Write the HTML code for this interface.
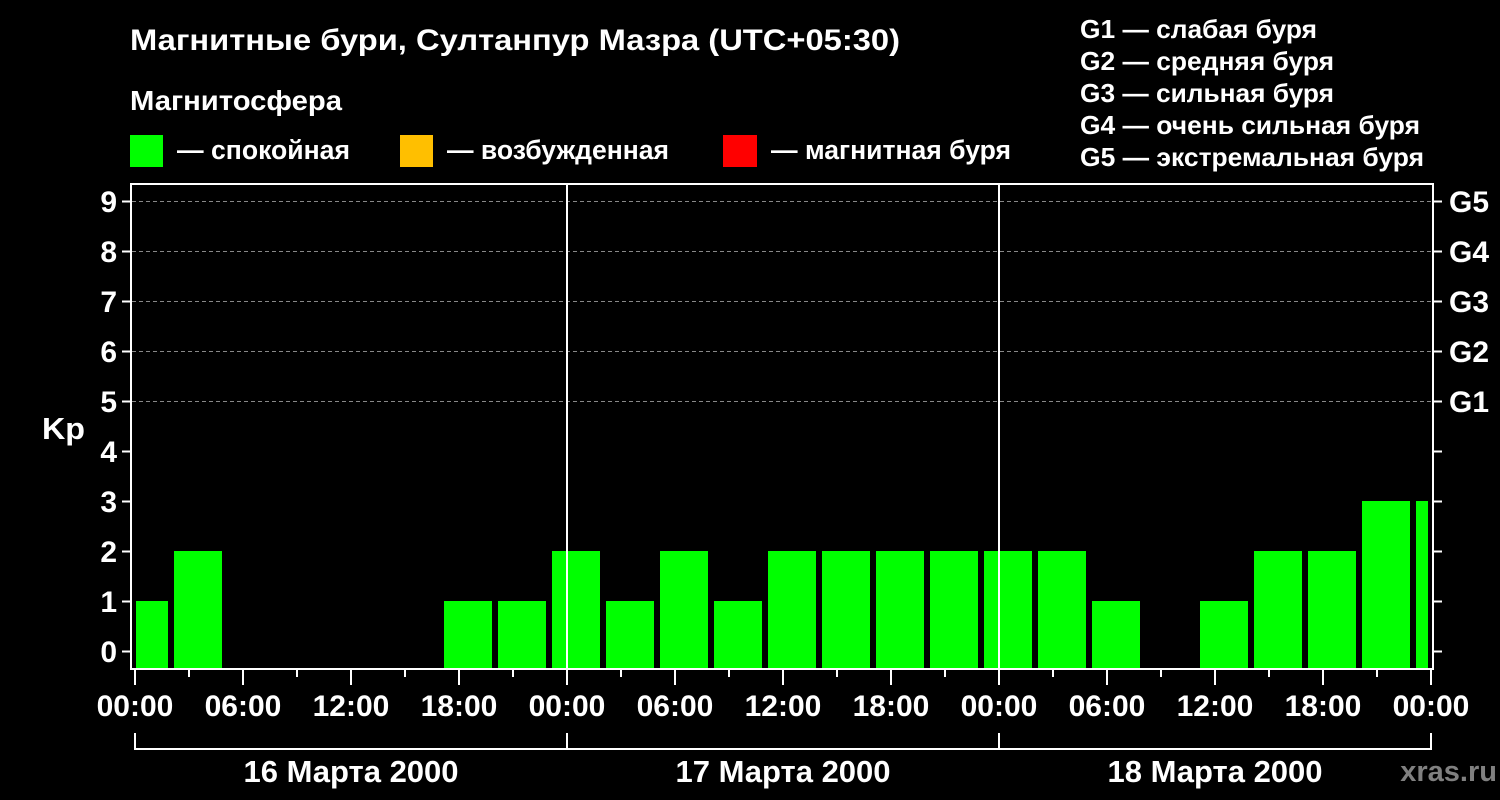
<!DOCTYPE html>
<html><head><meta charset="utf-8"><style>
html,body{margin:0;padding:0;background:#000;}
svg{display:block;}
text{font-family:"Liberation Sans",sans-serif;font-weight:bold;fill:#fff;}
</style></head><body>
<svg width="1500" height="800" viewBox="0 0 1500 800" xmlns="http://www.w3.org/2000/svg">
<rect width="1500" height="800" fill="#000"/>
<text x="130" y="50" font-size="30" textLength="770" lengthAdjust="spacingAndGlyphs">Магнитные бури, Султанпур Мазра (UTC+05:30)</text>
<text x="130" y="110" font-size="28" textLength="212" lengthAdjust="spacingAndGlyphs">Магнитосфера</text>
<rect x="130" y="135" width="33" height="32" fill="#00ff00"/>
<text x="177" y="159" font-size="27" textLength="173" lengthAdjust="spacingAndGlyphs">— спокойная</text>
<rect x="400" y="135" width="33" height="32" fill="#ffbf00"/>
<text x="447" y="159" font-size="27" textLength="222" lengthAdjust="spacingAndGlyphs">— возбужденная</text>
<rect x="723" y="135" width="34" height="32" fill="#ff0000"/>
<text x="771" y="159" font-size="27" textLength="240" lengthAdjust="spacingAndGlyphs">— магнитная буря</text>
<g font-size="26">
<text x="1080" y="38" textLength="237" lengthAdjust="spacingAndGlyphs">G1 — слабая буря</text>
<text x="1080" y="70" textLength="254" lengthAdjust="spacingAndGlyphs">G2 — средняя буря</text>
<text x="1080" y="102" textLength="254" lengthAdjust="spacingAndGlyphs">G3 — сильная буря</text>
<text x="1080" y="134" textLength="340" lengthAdjust="spacingAndGlyphs">G4 — очень сильная буря</text>
<text x="1080" y="166" textLength="344" lengthAdjust="spacingAndGlyphs">G5 — экстремальная буря</text>
</g>
<g stroke="#888" stroke-width="1" stroke-dasharray="4,3">
<line x1="132" y1="201.5" x2="1432" y2="201.5"/>
<line x1="132" y1="251.5" x2="1432" y2="251.5"/>
<line x1="132" y1="301.5" x2="1432" y2="301.5"/>
<line x1="132" y1="351.5" x2="1432" y2="351.5"/>
<line x1="132" y1="401.5" x2="1432" y2="401.5"/>
</g>
<g fill="#00ff00">
<rect x="136" y="601" width="32" height="67"/>
<rect x="174" y="551" width="48" height="117"/>
<rect x="444" y="601" width="48" height="67"/>
<rect x="498" y="601" width="48" height="67"/>
<rect x="552" y="551" width="48" height="117"/>
<rect x="606" y="601" width="48" height="67"/>
<rect x="660" y="551" width="48" height="117"/>
<rect x="714" y="601" width="48" height="67"/>
<rect x="768" y="551" width="48" height="117"/>
<rect x="822" y="551" width="48" height="117"/>
<rect x="876" y="551" width="48" height="117"/>
<rect x="930" y="551" width="48" height="117"/>
<rect x="984" y="551" width="48" height="117"/>
<rect x="1038" y="551" width="48" height="117"/>
<rect x="1092" y="601" width="48" height="67"/>
<rect x="1200" y="601" width="48" height="67"/>
<rect x="1254" y="551" width="48" height="117"/>
<rect x="1308" y="551" width="48" height="117"/>
<rect x="1362" y="501" width="48" height="167"/>
<rect x="1416" y="501" width="12" height="167"/>
</g>
<g stroke="#fff" stroke-width="2" fill="none">
<line x1="131" y1="184" x2="1433" y2="184"/>
<line x1="131" y1="183" x2="131" y2="670"/>
<line x1="1433" y1="183" x2="1433" y2="670"/>
<line x1="130" y1="669" x2="1434" y2="669"/>
<line x1="567" y1="183" x2="567" y2="668"/>
<line x1="999" y1="183" x2="999" y2="668"/>
</g>
<g stroke="#fff" stroke-width="2">
<line x1="122" y1="201.5" x2="131" y2="201.5"/><line x1="1433" y1="201.5" x2="1442" y2="201.5"/>
<line x1="122" y1="251.5" x2="131" y2="251.5"/><line x1="1433" y1="251.5" x2="1442" y2="251.5"/>
<line x1="122" y1="301.5" x2="131" y2="301.5"/><line x1="1433" y1="301.5" x2="1442" y2="301.5"/>
<line x1="122" y1="351.5" x2="131" y2="351.5"/><line x1="1433" y1="351.5" x2="1442" y2="351.5"/>
<line x1="122" y1="401.5" x2="131" y2="401.5"/><line x1="1433" y1="401.5" x2="1442" y2="401.5"/>
<line x1="122" y1="451.5" x2="131" y2="451.5"/><line x1="1433" y1="451.5" x2="1442" y2="451.5"/>
<line x1="122" y1="501.5" x2="131" y2="501.5"/><line x1="1433" y1="501.5" x2="1442" y2="501.5"/>
<line x1="122" y1="551.5" x2="131" y2="551.5"/><line x1="1433" y1="551.5" x2="1442" y2="551.5"/>
<line x1="122" y1="601.5" x2="131" y2="601.5"/><line x1="1433" y1="601.5" x2="1442" y2="601.5"/>
<line x1="122" y1="651.5" x2="131" y2="651.5"/><line x1="1433" y1="651.5" x2="1442" y2="651.5"/>
</g>
<g font-size="30" text-anchor="end">
<text x="117" y="212">9</text><text x="117" y="262">8</text><text x="117" y="312">7</text>
<text x="117" y="362">6</text><text x="117" y="412">5</text><text x="117" y="462">4</text>
<text x="117" y="512">3</text><text x="117" y="562">2</text><text x="117" y="612">1</text>
<text x="117" y="662">0</text>
</g>
<text x="42" y="439" font-size="31" textLength="43" lengthAdjust="spacingAndGlyphs">Kp</text>
<g font-size="30">
<text x="1449" y="212">G5</text><text x="1449" y="262">G4</text><text x="1449" y="312">G3</text>
<text x="1449" y="362">G2</text><text x="1449" y="412">G1</text>
</g>
<g stroke="#fff" stroke-width="2">
<line x1="135" y1="669" x2="135" y2="685"/><line x1="189" y1="669" x2="189" y2="677"/>
<line x1="243" y1="669" x2="243" y2="685"/><line x1="297" y1="669" x2="297" y2="677"/>
<line x1="351" y1="669" x2="351" y2="685"/><line x1="405" y1="669" x2="405" y2="677"/>
<line x1="459" y1="669" x2="459" y2="685"/><line x1="513" y1="669" x2="513" y2="677"/>
<line x1="567" y1="669" x2="567" y2="685"/><line x1="621" y1="669" x2="621" y2="677"/>
<line x1="675" y1="669" x2="675" y2="685"/><line x1="729" y1="669" x2="729" y2="677"/>
<line x1="783" y1="669" x2="783" y2="685"/><line x1="837" y1="669" x2="837" y2="677"/>
<line x1="891" y1="669" x2="891" y2="685"/><line x1="945" y1="669" x2="945" y2="677"/>
<line x1="999" y1="669" x2="999" y2="685"/><line x1="1053" y1="669" x2="1053" y2="677"/>
<line x1="1107" y1="669" x2="1107" y2="685"/><line x1="1161" y1="669" x2="1161" y2="677"/>
<line x1="1215" y1="669" x2="1215" y2="685"/><line x1="1269" y1="669" x2="1269" y2="677"/>
<line x1="1323" y1="669" x2="1323" y2="685"/><line x1="1377" y1="669" x2="1377" y2="677"/>
<line x1="1431" y1="669" x2="1431" y2="685"/>
</g>
<g font-size="30" text-anchor="middle">
<text x="135" y="716">00:00</text><text x="243" y="716">06:00</text><text x="351" y="716">12:00</text>
<text x="459" y="716">18:00</text><text x="567" y="716">00:00</text><text x="675" y="716">06:00</text>
<text x="783" y="716">12:00</text><text x="891" y="716">18:00</text><text x="999" y="716">00:00</text>
<text x="1107" y="716">06:00</text><text x="1215" y="716">12:00</text><text x="1323" y="716">18:00</text>
<text x="1431" y="716">00:00</text>
</g>
<g stroke="#fff" stroke-width="2" fill="none">
<line x1="134" y1="749" x2="1432" y2="749"/>
<line x1="135" y1="733" x2="135" y2="749"/>
<line x1="567" y1="733" x2="567" y2="749"/>
<line x1="999" y1="733" x2="999" y2="749"/>
<line x1="1431" y1="733" x2="1431" y2="749"/>
</g>
<g font-size="31" text-anchor="middle">
<text x="351" y="782">16 Марта 2000</text>
<text x="783" y="782">17 Марта 2000</text>
<text x="1215" y="782">18 Марта 2000</text>
</g>
<text x="1497" y="781" font-size="29" text-anchor="end" style="fill:#808080">xras.ru</text>
</svg>
</body></html>
